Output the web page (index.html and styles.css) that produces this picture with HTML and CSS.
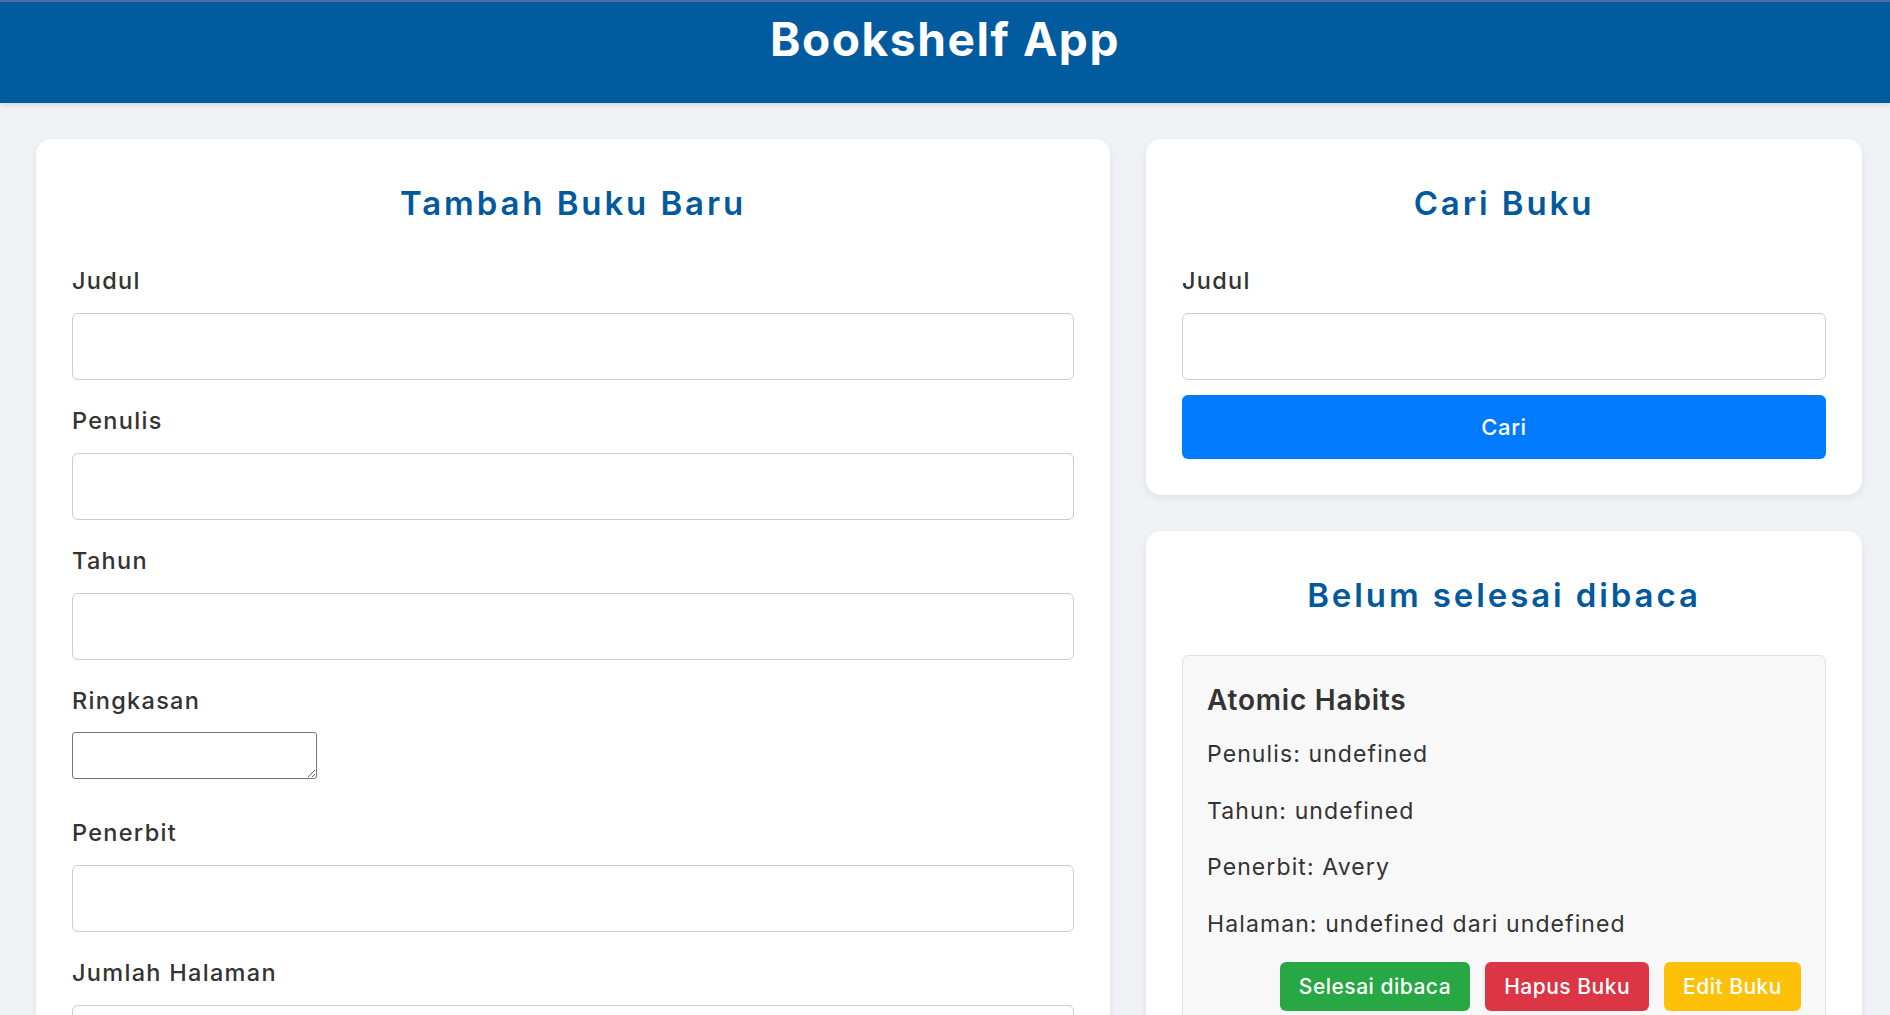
FILE: index.html
```html
<!DOCTYPE html>
<html lang="id">
<head>
<meta charset="utf-8">
<title>Bookshelf App</title>
<link rel="stylesheet" href="styles.css">
</head>
<body>
<header class="app-header">
  <h1 class="app-title">Bookshelf App</h1>
</header>
<main class="layout">
  <section class="card form-card">
    <h2 class="card-title">Tambah Buku Baru</h2>
    <form class="book-form">
      <label class="field-label" for="bookTitle">Judul</label>
      <input class="field-input" id="bookTitle" type="text">
      <label class="field-label" for="bookAuthor">Penulis</label>
      <input class="field-input" id="bookAuthor" type="text">
      <label class="field-label" for="bookYear">Tahun</label>
      <input class="field-input" id="bookYear" type="number">
      <label class="field-label" for="bookSummary">Ringkasan</label>
      <textarea class="field-textarea" id="bookSummary"></textarea>
      <label class="field-label" for="bookPublisher">Penerbit</label>
      <input class="field-input" id="bookPublisher" type="text">
      <label class="field-label" for="bookPages">Jumlah Halaman</label>
      <input class="field-input" id="bookPages" type="number">
    </form>
  </section>
  <div class="side-column">
    <section class="card search-card">
      <h2 class="card-title">Cari Buku</h2>
      <form class="search-form">
        <label class="field-label" for="searchTitle">Judul</label>
        <input class="field-input search-input" id="searchTitle" type="text">
        <button class="btn btn-primary" type="button">Cari</button>
      </form>
    </section>
    <section class="card list-card">
      <h2 class="card-title">Belum selesai dibaca</h2>
      <article class="book-item">
        <h3 class="book-title">Atomic Habits</h3>
        <p class="book-meta">Penulis: undefined</p>
        <p class="book-meta">Tahun: undefined</p>
        <p class="book-meta">Penerbit: Avery</p>
        <p class="book-meta">Halaman: undefined dari undefined</p>
        <div class="book-actions">
          <button class="btn btn-action btn-green" type="button">Selesai dibaca</button>
          <button class="btn btn-action btn-red" type="button">Hapus Buku</button>
          <button class="btn btn-action btn-yellow" type="button">Edit Buku</button>
        </div>
      </article>
    </section>
  </div>
</main>
</body>
</html>
```
FILE: styles.css
```css
* {
  box-sizing: border-box;
}

html, body {
  margin: 0;
  padding: 0;
}

body {
  background: #f0f2f5;
  font-family: Inter, "Open Sans", sans-serif;
  color: #333333;
  height: 1015px;
  overflow: hidden;
}

.app-header {
  height: 103px;
  background: #025b9e;
  border-top: 2px solid #4c6fa6;
  box-shadow: 0 2px 6px rgba(0, 0, 0, 0.12);
  position: relative;
  z-index: 1;
}

.app-title {
  margin: 0;
  text-align: center;
  color: #ffffff;
  font-size: 46px;
  font-weight: 700;
  line-height: 75px;
  letter-spacing: 1.6px;
}

.layout {
  display: grid;
  grid-template-columns: 3fr 2fr;
  column-gap: 36px;
  align-items: start;
  padding: 36px 28px 0 36px;
}

.side-column {
  display: flex;
  flex-direction: column;
  gap: 36px;
}

.card {
  background: #ffffff;
  border-radius: 15px;
  padding: 36px;
  box-shadow: 0 3px 9px rgba(0, 0, 0, 0.07);
}

.form-card {
  min-height: 1000px;
}

.card-title {
  margin: 0 0 31px;
  text-align: center;
  color: #02599c;
  font-size: 33px;
  font-weight: 600;
  line-height: 57px;
  letter-spacing: 2.9px;
}

.field-label {
  display: block;
  font-size: 23.5px;
  font-weight: 500;
  line-height: 36px;
  letter-spacing: 1.3px;
  color: #333333;
  margin-bottom: 14px;
}

.field-input {
  display: block;
  width: 100%;
  height: 67px;
  margin: 0 0 23px;
  padding: 0 15px;
  border: 1px solid #cccccc;
  border-radius: 6px;
  background: #ffffff;
  font-family: inherit;
  font-size: 24px;
}

.search-input {
  margin-bottom: 15px;
}

.field-textarea {
  display: block;
  width: 245px;
  height: 47px;
  margin: -1px 0 36px;
  border: 1px solid #767676;
  border-radius: 3px;
  background: #ffffff;
  font-family: inherit;
}

.btn {
  border: none;
  color: #ffffff;
  font-family: inherit;
  font-weight: 500;
  cursor: pointer;
}

.btn-primary {
  display: block;
  width: 100%;
  height: 64px;
  border-radius: 6px;
  background: #007bff;
  font-size: 22px;
  letter-spacing: 0.6px;
}

.book-item {
  background: #f8f8f8;
  border: 1px solid #e2e2e2;
  border-radius: 6px;
  padding: 24px;
  min-height: 400px;
}

.book-title {
  margin: 0 0 15px;
  font-size: 28px;
  font-weight: 600;
  line-height: 41px;
  letter-spacing: 0.8px;
  color: #333333;
}

.book-meta {
  margin: 0 0 20.5px;
  font-size: 23px;
  font-weight: 400;
  line-height: 36px;
  letter-spacing: 1.1px;
  color: #333333;
}

.book-actions {
  display: flex;
  justify-content: flex-end;
  gap: 15px;
}

.btn-action {
  height: 49px;
  padding: 0 19px;
  border-radius: 6px;
  font-size: 21px;
  letter-spacing: 0.5px;
}

.btn-green {
  background: #28a745;
}

.btn-red {
  background: #dc3545;
}

.btn-yellow {
  background: #ffc107;
}
```
